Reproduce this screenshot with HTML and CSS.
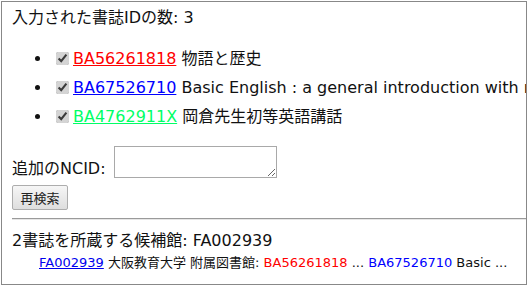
FILE: index.html
```html
<!DOCTYPE html>
<html lang="ja">
<head>
    <meta charset="UTF-8">
    <meta name="viewport" content="width=device-width, initial-scale=1.0">
    <title>書誌検索</title>
<link rel="stylesheet" href="styles.css">
</head>
<body>
    <div id="result">
        <p class="count">入力された書誌IDの数: 3</p>
        <ul class="books">
            <li><input type="checkbox" checked><a href="#" class="c1">BA56261818</a> 物語と歴史</li>
            <li><input type="checkbox" checked><a href="#" class="c2">BA67526710</a> Basic English : a general introduction with rules and grammar</li>
            <li><input type="checkbox" checked><a href="#" class="c3">BA4762911X</a> 岡倉先生初等英語講話</li>
        </ul>
        <div class="add">
            <label for="ncid">追加のNCID:</label>
            <textarea id="ncid"></textarea>
        </div>
        <button type="button">再検索</button>
        <hr>
        <p class="libs">2書誌を所蔵する候補館: FA002939</p>
        <div class="lib">
            <a href="#">FA002939</a> 大阪教育大学 附属図書館: <span class="c1">BA56261818</span> ... <span class="c2">BA67526710</span> Basic ...
        </div>
    </div>
</body>
</html>
```

FILE: styles.css
```css
body {
    margin: 0;
    font-family: "DejaVu Sans", "Noto Sans CJK JP", sans-serif;
    font-size: 16px;
    color: #111;
    background: #fff;
}

/* outer box */
#result {
    margin: 1px;
    width: 514px;
    height: 278px;
    padding: 4px 0 0 10px;
    border: 1px solid #888;
    overflow: hidden;
    white-space: nowrap;
}

.count {
    margin: 0;
    line-height: 24px;
}

.books {
    margin: 14px 0 0;
    padding-left: 40px;
}

.books li {
    line-height: 29px;
    height: 29px;
}

/* greyed checkbox like the old windows look */
.books input {
    width: 13px;
    height: 13px;
    margin: 0 4px 0 4px;
    vertical-align: -1px;
    accent-color: #d4d4d4;
}

.c1 { color: #f00; }
.c2 { color: #00f; }
.c3 { color: #0f6; }

.add {
    display: flex;
    align-items: flex-end;
    margin-top: 15px;
}

.add label {
    line-height: 24px;
    margin-right: 8px;
}

.add textarea {
    width: 157px;
    height: 26px;
    margin: 0 0 3px;
    padding: 2px;
    border: 1px solid #a9a9a9;
    resize: both;
}

button {
    display: block;
    margin-top: 4px;
    width: 56px;
    height: 25px;
    padding: 0;
    font-family: "Noto Sans CJK JP", sans-serif;
    font-size: 13px;
    color: #222;
    background: linear-gradient(#f6f6f6, #dedede);
    border: 1px solid #adadad;
    border-radius: 2px;
}

hr {
    margin: 8px 0 0;
    border: 0;
    border-top: 1px solid #9a9a9a;
    border-bottom: 1px solid #e6e6e6;
}

.libs {
    margin: 9px 0 0;
    line-height: 24px;
}

.lib {
    padding-left: 27px;
    font-size: 13px;
    line-height: 20px;
}

.lib a {
    color: #00e;
}
```
